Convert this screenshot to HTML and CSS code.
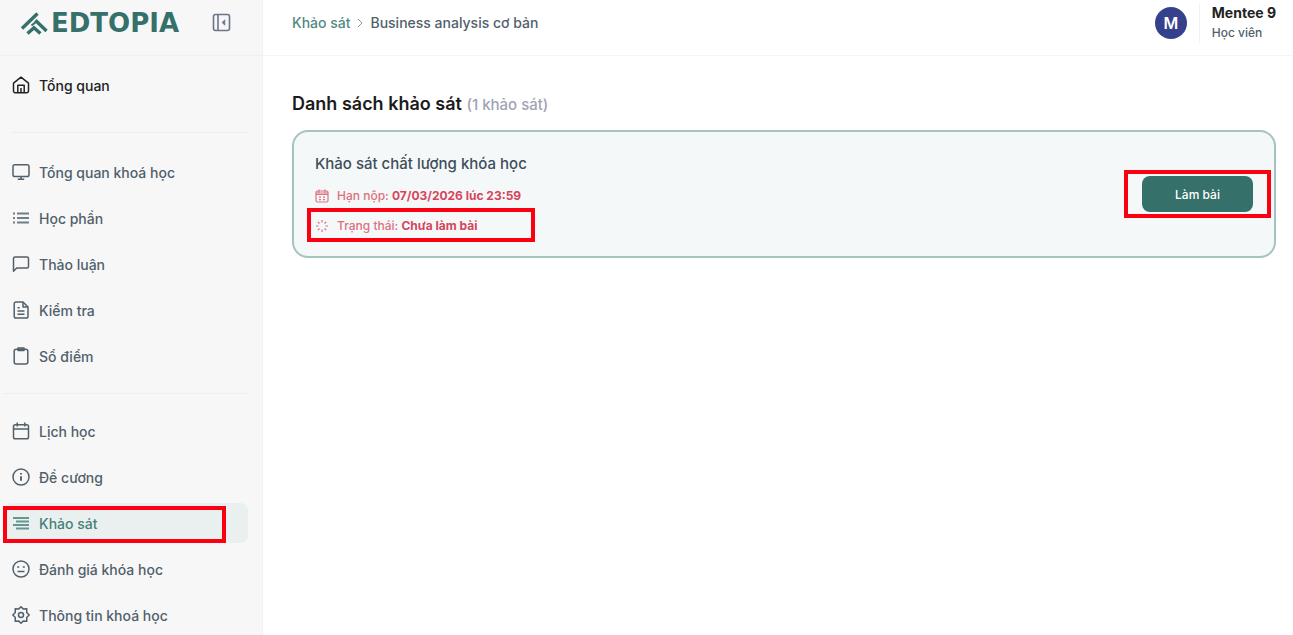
FILE: index.html
```html
<!DOCTYPE html>
<html lang="vi">
<head>
  <meta charset="UTF-8" />
  <meta name="viewport" content="width=device-width, initial-scale=1.0" />
  <title>Khảo sát - Edtopia</title>
  <link rel="stylesheet" href="styles.css">
</head>
<body>
  <aside class="sidebar">
    <div class="brand">
      <a class="logo" href="#">
        <svg width="28" height="24" viewBox="0 0 28 24" fill="none" stroke="currentColor" stroke-width="3.4">
          <path d="M2 17.500L17.500 2.500" />
          <path d="M7.500 22.500L14 16.800L20.400 22.500" />
          <path d="M15.400 9.200L26.500 20" />
          <path d="M11.500 14.500L17.500 9.800" stroke-width="2" />
        </svg>
        <span>EDTOPIA</span>
      </a>
      <button class="collapse" type="button" aria-label="Thu gọn">
        <svg width="19" height="19" viewBox="0 0 19 19" fill="none" stroke="currentColor" stroke-width="1.6">
          <rect x="1.5" y="1.5" width="16" height="16" rx="2" />
          <path d="M6 1.5v16" />
          <path d="M12.800 6.800L10.200 9.500l2.600 2.700z" fill="currentColor" stroke-width="0.8" />
        </svg>
      </button>
    </div>

    <nav class="menu">
      <div class="group">
        <a class="item home" href="#">
          <svg class="icon" viewBox="0 0 18 18"><path d="M1.500 7.200L9 1.200l7.500 6V15a1.800 1.800 0 0 1-1.800 1.800H3.300A1.800 1.800 0 0 1 1.500 15z" /><path d="M5.800 16.800V9.200h6.400v7.600M9 12v4.800" /></svg>
          Tổng quan
        </a>
      </div>
      <hr class="divider inset">
      <div class="group">
        <a class="item" href="#">
          <svg class="icon" viewBox="0 0 18 18"><rect x="1" y="1.800" width="16" height="11.800" rx="1.800" /><path d="M9 13.600v2.600M5.800 16.200h6.400" /></svg>
          Tổng quan khoá học
        </a>
        <a class="item" href="#">
          <svg class="icon bars" viewBox="0 0 18 18"><path d="M5 4.500h12M5 9h12M5 13.500h12M1 4.500h2M1 9h2M1 13.500h2" /></svg>
          Học phần
        </a>
        <a class="item" href="#">
          <svg class="icon" viewBox="0 0 18 18"><path d="M1.500 16.200V3.500A1.500 1.500 0 0 1 3 2h12a1.500 1.500 0 0 1 1.500 1.500v8A1.500 1.500 0 0 1 15 13H4.700z" /></svg>
          Thảo luận
        </a>
        <a class="item" href="#">
          <svg class="icon" viewBox="0 0 18 18"><path d="M4 1h7l5 5v9.200a1.800 1.800 0 0 1-1.800 1.800H4a1.800 1.800 0 0 1-1.800-1.800V2.800A1.800 1.800 0 0 1 4 1z" /><path d="M11 1v5h5M5.500 6.800h2.200M5.500 10h7M5.500 13.200h7" /></svg>
          Kiểm tra
        </a>
        <a class="item" href="#">
          <svg class="icon" viewBox="0 0 18 18"><rect x="2.200" y="2.200" width="13.600" height="14.800" rx="2" /><path d="M6 1h6v2.600H6z" /></svg>
          Sổ điểm
        </a>
      </div>
      <hr class="divider">
      <div class="group">
        <a class="item" href="#">
          <svg class="icon" viewBox="0 0 18 18"><rect x="1.500" y="2.800" width="15" height="14" rx="1.800" /><path d="M1.500 7h15M5.200 .6v4M12.800 .6v4" /></svg>
          Lịch học
        </a>
        <a class="item" href="#">
          <svg class="icon" viewBox="0 0 18 18"><circle cx="9" cy="9" r="8" /><path d="M9 8.200v4.600M9 5v1.600" stroke-width="1.900" /></svg>
          Đề cương
        </a>
        <a class="item active" href="#">
          <svg class="icon bars" viewBox="0 0 18 18"><path d="M1 4h16M4 7.500h13M1 11h16M4 14.500h13" /></svg>
          Khảo sát
          <span class="mark mark-menu"></span>
        </a>
        <a class="item" href="#">
          <svg class="icon" viewBox="0 0 18 18"><circle cx="9" cy="9" r="8" /><path d="M5.200 7h2M10.800 7h2M5.500 11.400h7" /></svg>
          Đánh giá khóa học
        </a>
        <a class="item" href="#">
          <svg class="icon" viewBox="0 0 18 18"><path d="M9 .8l2.200 2.100 3.600-.1-.1 3.600L17.200 9l-2.500 2.600.1 3.600-3.600-.1L9 17.200l-2.200-2.100-3.600.1.100-3.600L.8 9l2.500-2.600-.1-3.600 3.600.1z" /><circle cx="9" cy="9" r="2.500" /></svg>
          Thông tin khoá học
        </a>
      </div>
    </nav>
  </aside>

  <div class="page">
    <header class="topbar">
      <nav class="breadcrumb">
        <a href="#">Khảo sát</a>
        <svg width="6" height="10" viewBox="0 0 6 10" fill="none" stroke="currentColor"><path d="M1 1l4 4-4 4" /></svg>
        <span>Business analysis cơ bản</span>
      </nav>
      <div class="user">
        <div class="avatar">M</div>
        <div class="user-info">
          <strong>Mentee 9</strong>
          <span>Học viên</span>
        </div>
      </div>
    </header>

    <main class="content">
      <h1>Danh sách khảo sát <small>(1 khảo sát)</small></h1>
      <article class="survey">
        <div class="survey-info">
          <h2>Khảo sát chất lượng khóa học</h2>
          <p class="due">
            <svg width="14" height="14" viewBox="0 0 14 14" fill="none" stroke="currentColor" stroke-width="1.200"><rect x="1" y="2" width="12" height="11" rx="1.500" /><path d="M1 5.500h12M1 4h12M4 .5v3M10 .5v3M4 8.200h2M8 8.200h2M4 10.600h2M8 10.600h2" /></svg>
            <span>Hạn nộp: <b>07/03/2026 lúc 23:59</b></span>
          </p>
          <p class="status">
            <svg width="14" height="14" viewBox="0 0 14 14" fill="none" stroke="currentColor" stroke-width="1.200"><path d="M7 1v2.500M7 10.500V13M1 7h2.500M10.500 7H13M2.800 2.800l1.700 1.700M9.500 9.500l1.700 1.700M2.800 11.200l1.700-1.700M9.500 4.500l1.700-1.700" /></svg>
            <span>Trạng thái: <b>Chưa làm bài</b></span>
            <span class="mark mark-status"></span>
          </p>
        </div>
        <div class="survey-action">
          <button class="start" type="button">Làm bài</button>
          <span class="mark mark-action"></span>
        </div>
      </article>
    </main>
  </div>
</body>
</html>
```
FILE: styles.css
```css
:root {
  --green: #35706a;
  --text: #51606b;
  --line: #eef1f4;
  --red: #d6455a;
  --font-main: Inter, 'Noto Sans', sans-serif;
}

* {
  box-sizing: border-box;
}

body {
  margin: 0;
  display: flex;
  min-height: 100vh;
  font-family: var(--font-main);
  font-size: 14px;
  font-weight: 500;
  color: var(--text);
  background: #fff;
}

a {
  color: inherit;
  text-decoration: none;
}

h1, h2, p {
  margin: 0;
}

button {
  font-family: inherit;
  border: none;
  cursor: pointer;
}

.sidebar {
  flex: 0 0 263px;
  background: #f7f7f7;
  border-right: 1px solid #f0f1f3;
}

.brand {
  display: flex;
  justify-content: space-between;
  align-items: center;
  height: 56px;
  padding: 0 31px 10px 20px;
  border-bottom: 1px solid var(--line);
}

.logo {
  display: flex;
  align-items: center;
  gap: 3px;
  font-family: 'DejaVu Sans', sans-serif;
  font-size: 26px;
  line-height: 32px;
  font-weight: 700;
  color: var(--green);
}

.collapse {
  display: flex;
  padding: 0;
  background: none;
  color: #6b7489;
}

.menu {
  padding: 9px 14px 0 4px;
}

.group {
  display: flex;
  flex-direction: column;
  gap: 6px;
}

.item {
  position: relative;
  display: flex;
  align-items: center;
  gap: 9px;
  height: 40px;
  padding-left: 8px;
  border-radius: 8px;
}

.item.home {
  color: #222;
}

.item.active {
  background: #eaf0ef;
  color: #45807a;
}

.icon {
  width: 18px;
  height: 18px;
  fill: none;
  stroke: currentColor;
  stroke-width: 1.5;
  stroke-linejoin: round;
}

.icon.bars {
  stroke-width: 2;
  opacity: 0.8;
}

.divider {
  height: 1px;
  margin: 17px 0;
  border: none;
  background: #eceff0;
}

.divider.inset {
  margin: 27px 0 19px 8px;
}

.page {
  flex: 1;
  min-width: 0;
}

.topbar {
  display: flex;
  justify-content: space-between;
  align-items: center;
  height: 56px;
  padding: 0 17px 10px 29px;
  border-bottom: 1px solid #f3f5f8;
}

.breadcrumb {
  display: flex;
  align-items: center;
  gap: 7px;
}

.breadcrumb a {
  color: #508a83;
}

.breadcrumb svg {
  color: #8d979e;
}

.user {
  display: flex;
  align-items: center;
  gap: 12px;
}

.avatar {
  width: 32px;
  height: 32px;
  border-radius: 50%;
  background: #36418c;
  color: #fff;
  font-size: 16px;
  line-height: 32px;
  font-weight: 600;
  text-align: center;
}

.user-info {
  display: flex;
  flex-direction: column;
  padding-left: 12px;
  border-left: 1px solid #edf1f1;
  font-size: 12px;
  line-height: 20px;
}

.user-info strong {
  font-size: 14px;
  font-weight: 700;
  color: #222;
}

.content {
  padding: 36px 17px 24px 29px;
}

h1 {
  margin-bottom: 13px;
  font-size: 18px;
  line-height: 24px;
  font-weight: 600;
  color: #1b1b1b;
}

h1 small {
  font-size: 15px;
  font-weight: 500;
  color: #a0a3b5;
}

.survey {
  display: flex;
  justify-content: space-between;
  align-items: center;
  padding: 20px 21px;
  border: 2px solid #a5c3bf;
  border-radius: 16px;
  background: #f4f8f9;
}

.survey-info {
  display: flex;
  flex-direction: column;
  gap: 10px;
}

h2 {
  font-size: 15px;
  line-height: 24px;
  font-weight: 500;
  color: #414e5a;
}

.due,
.status {
  position: relative;
  display: flex;
  align-items: center;
  gap: 8px;
  font-size: 12px;
  line-height: 20px;
  color: #de7080;
}

.due b,
.status b {
  font-weight: 700;
  color: var(--red);
}

.survey-action {
  position: relative;
}

.start {
  display: block;
  width: 111px;
  height: 36px;
  border-radius: 8px;
  background: var(--green);
  color: #fff;
  font-size: 12px;
  font-weight: 500;
}

/* red highlight frames */
.mark {
  position: absolute;
  border: 4px solid #fb0010;
  pointer-events: none;
}

.mark-menu {
  inset: 3px 22px 0 -1px;
}

.mark-status {
  top: -8px;
  bottom: -6px;
  left: -8px;
  width: 228px;
}

.mark-action {
  inset: -6px -18px -6px -18px;
}
```
